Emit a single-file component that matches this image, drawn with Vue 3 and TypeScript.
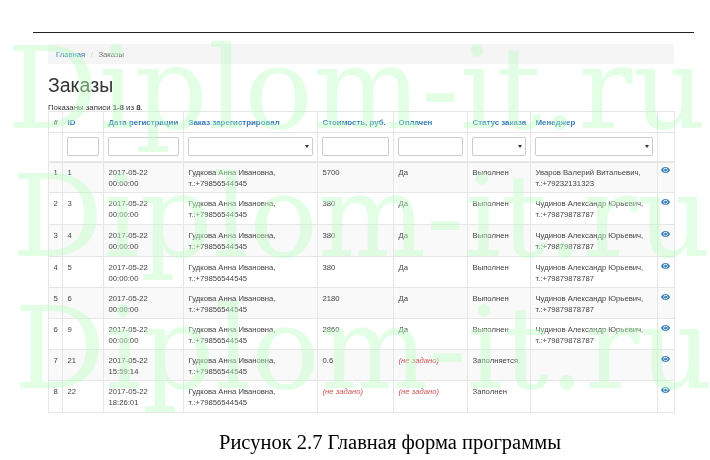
<script setup lang="ts">
interface Order { n: number; id: number; date: string; time: string; cost: string | null; paid: string | null; status: string; manager: string; phone: string }
const alex = 'Чудинов Александр Юрьевич,'
const alexPhone = 'т.:+79879878787'
const orders: Order[] = [
  { n: 1, id: 1, date: '2017-05-22', time: '00:00:00', cost: '5700', paid: 'Да', status: 'Выполнен', manager: 'Уваров Валерий Витальевич,', phone: 'т.:+79232131323' },
  { n: 2, id: 3, date: '2017-05-22', time: '00:00:00', cost: '380', paid: 'Да', status: 'Выполнен', manager: alex, phone: alexPhone },
  { n: 3, id: 4, date: '2017-05-22', time: '00:00:00', cost: '380', paid: 'Да', status: 'Выполнен', manager: alex, phone: alexPhone },
  { n: 4, id: 5, date: '2017-05-22', time: '00:00:00', cost: '380', paid: 'Да', status: 'Выполнен', manager: alex, phone: alexPhone },
  { n: 5, id: 6, date: '2017-05-22', time: '00:00:00', cost: '2180', paid: 'Да', status: 'Выполнен', manager: alex, phone: alexPhone },
  { n: 6, id: 9, date: '2017-05-22', time: '00:00:00', cost: '2860', paid: 'Да', status: 'Выполнен', manager: alex, phone: alexPhone },
  { n: 7, id: 21, date: '2017-05-22', time: '15:59:14', cost: '0.6', paid: null, status: 'Заполняется', manager: '', phone: '' },
  { n: 8, id: 22, date: '2017-05-22', time: '18:26:01', cost: null, paid: null, status: 'Заполнен', manager: '', phone: '' },
]
const headers = ['ID', 'Дата регистрации', 'Заказ зарегистрировал', 'Стоимость, руб.', 'Оплачен', 'Статус заказа', 'Менеджер']
const marks = [
  { text: 'Diplom-it.ru', cls: 'm1' },
  { text: 'Diplom-it.ru', cls: 'm2' },
  { text: 'Diplom-it.ru', cls: 'm3' },
]
</script>

<template>
  <div class="page">
    <div class="rule"></div>
    <div class="content">
      <nav class="crumbs"><a>Главная</a><span class="sep">/</span><span class="cur">Заказы</span></nav>
      <h1>Заказы</h1>
      <div class="summary">Показаны записи <b>1-8</b> из <b>8</b>.</div>
      <table>
        <colgroup>
          <col class="c1" /><col class="c2" /><col class="c3" /><col class="c4" />
          <col class="c5" /><col class="c6" /><col class="c7" /><col class="c8" /><col class="c9" />
        </colgroup>
        <thead>
          <tr class="head">
            <th class="hash">#</th>
            <th v-for="h in headers" :key="h"><a>{{ h }}</a></th>
            <th></th>
          </tr>
          <tr class="filters">
            <td></td>
            <td><input type="text" /></td>
            <td><input type="text" /></td>
            <td><span class="sel"><select></select></span></td>
            <td><input type="text" /></td>
            <td><input type="text" /></td>
            <td><span class="sel"><select></select></span></td>
            <td><span class="sel"><select></select></span></td>
            <td></td>
          </tr>
        </thead>
        <tbody>
          <tr v-for="o in orders" :key="o.id">
            <td>{{ o.n }}</td>
            <td>{{ o.id }}</td>
            <td>{{ o.date }}<br />{{ o.time }}</td>
            <td>Гудкова Анна Ивановна,<br />т.:+79856544545</td>
            <td><template v-if="o.cost">{{ o.cost }}</template><i v-else>(не задано)</i></td>
            <td><template v-if="o.paid">{{ o.paid }}</template><i v-else>(не задано)</i></td>
            <td>{{ o.status }}</td>
            <td>{{ o.manager }}<br v-if="o.manager" />{{ o.phone }}</td>
            <td class="act">
              <svg viewBox="0 0 24 16" width="9" height="6" aria-hidden="true">
                <path fill="#337ab7" fill-rule="evenodd" d="M12 0C6.500 0 2.300 3.400 0 8c2.300 4.600 6.500 8 12 8s9.700-3.400 12-8C21.700 3.400 17.500 0 12 0zM12 2.200a5.800 5.800 0 1 1 0 11.600a5.800 5.800 0 0 1 0-11.600z" />
                <circle cx="12" cy="8" r="4" fill="#337ab7" />
                <circle cx="10.300" cy="6.300" r="1.300" fill="#fff" />
              </svg>
            </td>
          </tr>
        </tbody>
      </table>
      <div class="caption">Рисунок 2.7 Главная форма программы</div>
    </div>
    <div v-for="m in marks" :key="m.cls" class="mark" :class="m.cls">{{ m.text }}</div>
  </div>
</template>

<style scoped>
.page {
  position: relative;
  width: 710px;
  height: 460px;
  overflow: hidden;
  background: #fff;
  font-family: "Liberation Sans", Arial, sans-serif;
  font-size: 7.700px;
  line-height: 11px;
  color: #444;
  filter: blur(0.35px);
}
.rule {
  margin: 0 16px 0 33px;
  padding-top: 32px;
  border-bottom: 1.300px solid #222;
}
.content {
  padding: 11px 36px 0 48px;
}
.crumbs {
  display: flex;
  align-items: center;
  gap: 5.500px;
  height: 20px;
  padding-left: 8px;
  background: #f5f5f5;
  border-radius: 2px;
  color: #777;
}
.crumbs a { color: #337ab7; }
.sep { color: #ccc; }
h1 {
  margin: 9px 0 0;
  font-size: 19.500px;
  line-height: 24px;
  font-weight: 400;
  color: #333;
}
.summary {
  margin-top: 4px;
  height: 10px;
  line-height: 14px;
  font-size: 7.800px;
  color: #333;
}
table {
  width: 626px;
  table-layout: fixed;
  border-collapse: collapse;
}
.c1 { width: 14px; }
.c2 { width: 41px; }
.c3 { width: 80px; }
.c4 { width: 134px; }
.c5 { width: 76px; }
.c6 { width: 74px; }
.c7 { width: 63px; }
.c8 { width: 127px; }
.c9 { width: 17px; }
th, td {
  border: 1px solid #e6e6e6;
  padding: 4.500px 4.500px 3.500px;
  text-align: left;
  vertical-align: top;
  white-space: nowrap;
}
.head { height: 21px; }
.head th { vertical-align: middle; padding: 0 4.500px; font-size: 7.900px; font-weight: 700; }
.head a { color: #337ab7; }
.hash { color: #444; }
.filters { height: 29px; }
.filters td { padding: 4px 4.500px 4px 3.500px; border-bottom-width: 2px; vertical-align: middle; }
input, select {
  display: block;
  box-sizing: border-box;
  width: 100%;
  height: 19px;
  margin: 0;
  padding: 0;
  border: 1px solid #ccc;
  border-radius: 2px;
  background: #fff;
  appearance: none;
}
.sel { display: block; position: relative; }
.sel::after {
  content: "";
  position: absolute;
  right: 4px;
  top: 8px;
  border-left: 2px solid transparent;
  border-right: 2px solid transparent;
  border-top: 3px solid #333;
}
tbody tr { height: 31px; }
tbody tr:nth-child(2), tbody tr:nth-child(3), tbody tr:nth-child(8) { height: 32px; }
tbody tr:first-child td { padding-top: 4px; padding-bottom: 3px; }
tbody tr:nth-child(odd) td { background: #f9f9f9; }
td i { color: #c55; }
tbody .act { padding: 6px 0 0 3px; }
.act svg { display: block; }
.caption {
  margin: 18px 0 0 171px;
  font-family: "Liberation Serif", "Times New Roman", serif;
  font-size: 20.500px;
  line-height: 22px;
  color: #000;
  white-space: nowrap;
}
.mark {
  position: absolute;
  font-family: "DejaVu Serif", serif;
  font-size: 114px;
  line-height: 114px;
  white-space: nowrap;
  color: rgba(190, 255, 200, 0.45);
  pointer-events: none;
}
.m1 { left: 7px; top: 32px; }
.m2 { left: 12px; top: 160px; }
.m3 { left: 14px; top: 292px; }
</style>
